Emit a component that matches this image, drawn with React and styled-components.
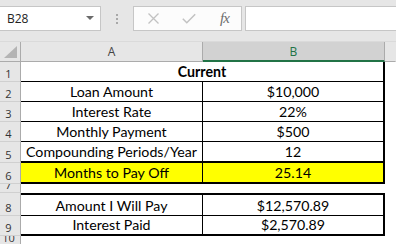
import React from 'react'
import styled, { createGlobalStyle } from 'styled-components'

const GlobalStyle = createGlobalStyle`
   html, body { margin: 0; padding: 0; background: #fff; }
   * { box-sizing: border-box; }
`

const Sheet = styled.div`
   width: 396px;
   height: 244px;
   overflow: hidden;
   background: #fff;
   font-family: Lato, "Liberation Sans", sans-serif;
`

const TopBar = styled.div`
   display: flex;
   align-items: flex-start;
   height: 42px;
   padding-top: 6px;
   background: #e6e6e6;
   border-bottom: 1px solid #dadada;
`

const NameBox = styled.div`
   position: relative;
   width: 101px;
   height: 25px;
   background: #fff;
   border: 1px solid #c6c6c6;
   border-left: none;
   display: flex;
   align-items: center;
   padding-left: 7px;
   font-family: "Open Sans", sans-serif;
   font-size: 12px;
   color: #222;
`

const DropArrow = styled.span`
   position: absolute;
   right: 6px;
   top: 9px;
   border-left: 4px solid transparent;
   border-right: 4px solid transparent;
   border-top: 4px solid #6a6a6a;
`

const Grip = styled.div`
   width: 32px;
   height: 25px;
   display: flex;
   flex-direction: column;
   align-items: center;
   justify-content: center;
   gap: 2px;
   span {
      width: 2px;
      height: 2px;
      background: #a8a8a8;
   }
`

const IconBox = styled.div`
   width: 109px;
   height: 25px;
   background: #fcfcfc;
   border: 1px solid #c6c6c6;
   display: flex;
   align-items: center;
   padding-left: 14px;
   gap: 23px;
`

const Fx = styled.span`
   font-family: "Liberation Serif", serif;
   font-style: italic;
   font-size: 15px;
   color: #6d6d6d;
   margin-left: 1px;
   letter-spacing: -1px;
`

const FormulaBox = styled.div`
   flex: 1;
   height: 25px;
   margin-left: 3px;
   background: #fff;
   border: 1px solid #c6c6c6;
   border-right: none;
`

const HeadRow = styled.div`
   display: flex;
   height: 20px;
   background: #e6e6e6;
`

const Corner = styled.div`
   width: 21px;
   border-right: 1px solid #ababab;
   border-bottom: 1px solid #ababab;
   display: flex;
   align-items: flex-end;
   justify-content: flex-end;
   padding: 0 3px 3px 0;
`

const ColHead = styled.div`
   width: ${p => p.$w}px;
   flex: ${p => (p.$w ? 'none' : 1)};
   display: flex;
   align-items: center;
   justify-content: center;
   font-family: "Open Sans", sans-serif;
   font-size: 12px;
   background: ${p => (p.$active ? '#d2d2d2' : '#e6e6e6')};
   color: ${p => (p.$active ? '#217346' : '#444')};
   border-right: 1px solid ${p => (p.$last ? 'transparent' : '#ababab')};
   border-bottom: ${p => (p.$active ? '2px solid #217346' : '1px solid #ababab')};
`

const Row = styled.div`
   display: flex;
   height: ${p => p.$h}px;
   overflow: hidden;
`

const RowHead = styled.div`
   width: 21px;
   flex: none;
   background: #e6e6e6;
   border-right: 1px solid #ababab;
   border-bottom: 1px solid #d0d0d0;
   display: flex;
   align-items: flex-end;
   justify-content: center;
   padding-right: 3px;
   font-family: "Open Sans", sans-serif;
   font-size: 11px;
   line-height: 14px;
   color: #333;
   overflow: hidden;
`

const Cell = styled.div`
   width: ${p => p.$w}px;
   flex: ${p => (p.$w ? 'none' : 1)};
   display: flex;
   align-items: flex-end;
   justify-content: center;
   padding-bottom: 1px;
   font-size: 14.2px;
   line-height: 16px;
   font-weight: ${p => (p.$bold ? 700 : 400)};
   color: #000;
   white-space: nowrap;
   background: ${p => p.$fill || 'transparent'};
   border-top: ${p => p.$bt || 0}px solid #000;
   border-bottom: ${p => p.$bb || 0}px solid #000;
   border-right: ${p => p.$br || 0}px solid #000;
`

const rows = [
   { n: 1, h: 20, merged: 'Current', bb: 1 },
   { n: 2, h: 20, a: 'Loan Amount', b: '$10,000', bb: 1 },
   { n: 3, h: 20, a: 'Interest Rate', b: '22%', bb: 1 },
   { n: 4, h: 20, a: 'Monthly Payment', b: '$500', bb: 1 },
   { n: 5, h: 21, a: 'Compounding Periods/Year', b: '12', bb: 2 },
   { n: 6, h: 21, a: 'Months to Pay Off', b: '25.14', bb: 2, fill: '#ffff00' },
   { n: 7, h: 9 },
   { n: 8, h: 23, a: 'Amount I Will Pay', b: '$12,570.89', bt: 2, bb: 1 },
   { n: 9, h: 20, a: 'Interest Paid', b: '$2,570.89', bb: 2 },
   { n: 10, h: 10 },
   { n: 11, h: 20 },
]

function SheetRow({ row }) {
   const { n, h, merged, a, b, bt, bb, fill } = row
   return (
      <Row $h={h}>
         <RowHead>{n}</RowHead>
         {merged ? (
            <Cell $w={364} $bold $bb={bb} $br={2}>{merged}</Cell>
         ) : a ? (
            <>
               <Cell $w={182} $bt={bt} $bb={bb} $br={1} $fill={fill}>{a}</Cell>
               <Cell $w={182} $bt={bt} $bb={bb} $br={2} $fill={fill}>{b}</Cell>
            </>
         ) : (
            <>
               <Cell $w={182} />
               <Cell $w={182} />
            </>
         )}
         <Cell />
      </Row>
   )
}

export default function App() {
   return (
      <>
         <GlobalStyle />
         <Sheet>
            <TopBar>
               <NameBox>
                  B28
                  <DropArrow />
               </NameBox>
               <Grip><span /><span /><span /></Grip>
               <IconBox>
                  <svg width="11" height="11" viewBox="0 0 11 11">
                     <path d="M0.5 0.5 L10.5 10.5 M10.5 0.5 L0.5 10.5" stroke="#c2c2c2" strokeWidth="1.3" fill="none" />
                  </svg>
                  <svg width="14" height="11" viewBox="0 0 14 11">
                     <path d="M0.8 5.8 L4.8 9.8 L13.2 1.2" stroke="#c2c2c2" strokeWidth="1.5" fill="none" />
                  </svg>
                  <Fx>fx</Fx>
               </IconBox>
               <FormulaBox />
            </TopBar>
            <HeadRow>
               <Corner>
                  <svg width="13" height="12" viewBox="0 0 13 12">
                     <path d="M13 0 L13 12 L0 12 Z" fill="#b4b4b4" />
                  </svg>
               </Corner>
               <ColHead $w={182}>A</ColHead>
               <ColHead $w={182} $active>B</ColHead>
               <ColHead $last />
            </HeadRow>
            {rows.map(row => (
               <SheetRow key={row.n} row={row} />
            ))}
         </Sheet>
      </>
   )
}
